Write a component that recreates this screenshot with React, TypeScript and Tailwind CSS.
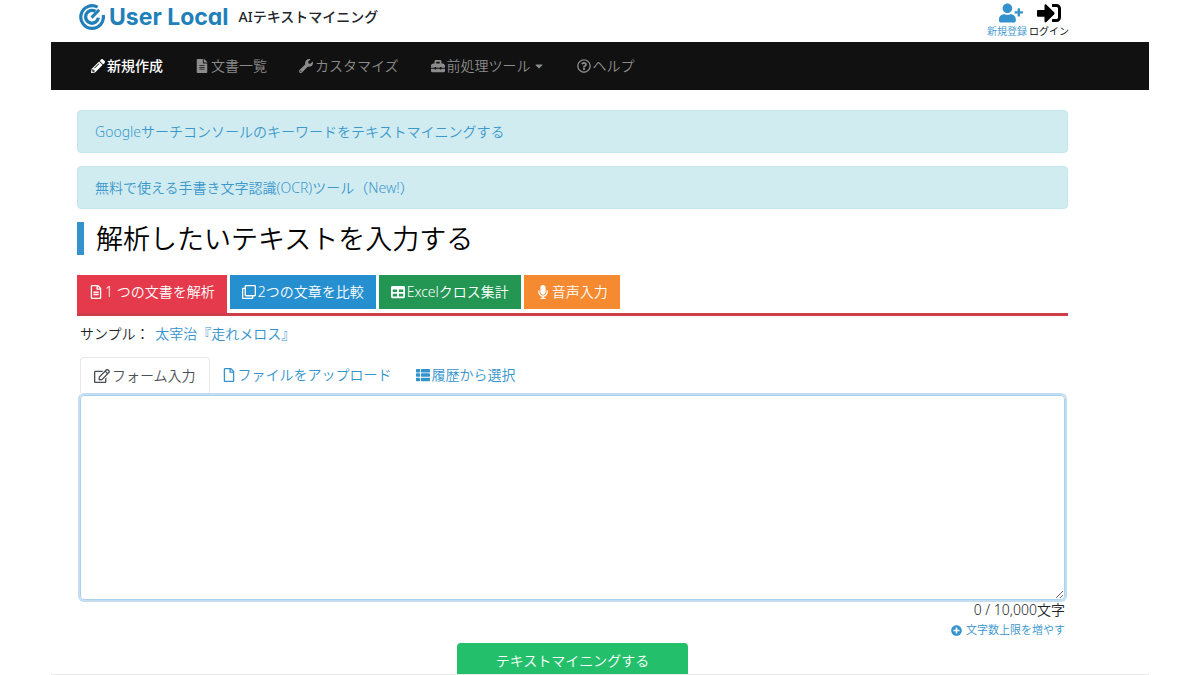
import type { ReactNode } from "react";
import {
  FaCaretDown,
  FaFileAlt,
  FaMicrophone,
  FaPencilAlt,
  FaPlusCircle,
  FaRegClone,
  FaRegEdit,
  FaRegFile,
  FaRegFileAlt,
  FaRegQuestionCircle,
  FaSignInAlt,
  FaTable,
  FaThList,
  FaToolbox,
  FaUserPlus,
  FaWrench,
} from "react-icons/fa";

function Logo() {
  return (
    <svg viewBox="0 0 26 26" className="size-[26px]" fill="none" stroke="#2180b9" aria-hidden="true">
      <path d="M18.6 3.2A11.3 11.3 0 1 0 24.2 11" strokeWidth="3.2" />
      <path d="M16.4 7.4A6.4 6.4 0 1 0 19.3 13.6" strokeWidth="3.4" />
      <path d="M12.6 13.6 20.2 5.8" strokeWidth="3" />
    </svg>
  );
}

function NavLink({ icon, children, active }: { icon: ReactNode; children: ReactNode; active?: boolean }) {
  return (
    <a href="#" className={`flex items-center gap-0.5 ${active ? "font-medium text-white" : "text-[#8c8c8c]"}`}>
      {icon}
      {children}
    </a>
  );
}

function Notice({ children }: { children: ReactNode }) {
  return (
    <div className="rounded-sm border border-[#c5e6ec] bg-[#d1ecf1] px-[17px] pt-[11px] pb-2.5 text-[#3c98cb]">
      <a href="#">{children}</a>
    </div>
  );
}

export default function App() {
  return (
    <div className="bg-white px-[51px] font-['Noto_Sans','Noto_Sans_CJK_JP',sans-serif] text-sm leading-5 font-[350] text-[#212529]">
      <header className="flex h-[42px] items-start justify-between pr-20 pl-7">
        <a href="#" className="flex items-center pt-[3px]">
          <Logo />
          <span className="ml-1 font-['Inter',sans-serif] text-[23px] leading-7 font-bold text-[#2180b9] [font-feature-settings:'cv11']">
            User Local
          </span>
          <span className="ml-2.5 font-medium">AIテキストマイニング</span>
        </a>
        <div className="flex gap-0.5 pt-px text-[10px] leading-3">
          <a href="#" className="flex flex-col items-center text-[#3493cd]">
            <FaUserPlus className="ml-2 text-2xl" />
            新規登録
          </a>
          <a href="#" className="flex flex-col items-center text-black">
            <FaSignInAlt className="text-2xl" />
            ログイン
          </a>
        </div>
      </header>

      <nav className="flex h-12 items-center gap-8 bg-[#111] px-10">
        <NavLink active icon={<FaPencilAlt />}>新規作成</NavLink>
        <NavLink icon={<FaFileAlt />}>文書一覧</NavLink>
        <NavLink icon={<FaWrench />}>カスタマイズ</NavLink>
        <NavLink icon={<FaToolbox />}>
          前処理ツール
          <FaCaretDown className="text-xs" />
        </NavLink>
        <NavLink icon={<FaRegQuestionCircle />}>ヘルプ</NavLink>
      </nav>

      <main className="pt-5 pr-[81px] pl-[26px]">
        <div className="space-y-[13px]">
          <Notice>Googleサーチコンソールのキーワードをテキストマイニングする</Notice>
          <Notice>無料で使える手書き文字認識(OCR)ツール（New!）</Notice>
        </div>

        <h1 className="mt-[13px] border-l-7 border-[#3493cd] pl-3 text-[27px] leading-[33px] text-black">
          解析したいテキストを入力する
        </h1>

        <div className="mt-5 flex items-start gap-[3px] border-b-3 border-[#cf3d4b] text-white">
          <button className="flex h-[38px] items-center gap-0.5 bg-[#e43a4b] px-3 pb-1">
            <FaRegFileAlt />1 つの文書を解析
          </button>
          <button className="flex h-[34px] items-center gap-0.5 bg-[#268fd0] px-3">
            <FaRegClone />2つの文章を比較
          </button>
          <button className="flex h-[34px] items-center gap-0.5 bg-[#239654] px-3">
            <FaTable />Excelクロス集計
          </button>
          <button className="flex h-[34px] items-center gap-0.5 bg-[#f68a30] px-3">
            <FaMicrophone />音声入力
          </button>
        </div>

        <div className="px-[3px]">
          <p className="mt-2">
            サンプル： <a href="#" className="ml-0.5 text-[#3493cd]">太宰治『走れメロス』</a>
          </p>

          <div className="mt-[13px] flex text-[#3493cd]">
            <button className="flex h-9 items-center gap-0.5 rounded-t-sm border border-b-0 border-[#e6e8ea] px-[13px] text-[#495057]">
              <FaRegEdit className="text-base" />
              フォーム入力
            </button>
            <button className="flex h-9 items-center gap-0.5 px-3">
              <FaRegFile />
              ファイルをアップロード
            </button>
            <button className="flex h-9 items-center gap-0.5 px-3">
              <FaThList />
              履歴から選択
            </button>
          </div>

          <textarea
            aria-label="フォーム入力"
            className="mt-0.5 block h-[205px] w-full rounded-sm border border-[#a9d2ef] px-3 py-2 ring-2 ring-[#c3def3] outline-none"
          />

          <div className="text-right">
            <p>0 / 10,000文字</p>
            <a href="#" className="flex items-center justify-end gap-1 text-[11px] text-[#3493cd]">
              <FaPlusCircle />
              文字数上限を増やす
            </a>
          </div>
        </div>

        <button className="mx-auto mt-[3px] block h-[31px] w-[231px] rounded-t-sm bg-[#23bf6b] pt-1 text-white">テキストマイニングする</button>
      </main>
      <hr className="border-[#e8e8e8]" />
    </div>
  );
}
